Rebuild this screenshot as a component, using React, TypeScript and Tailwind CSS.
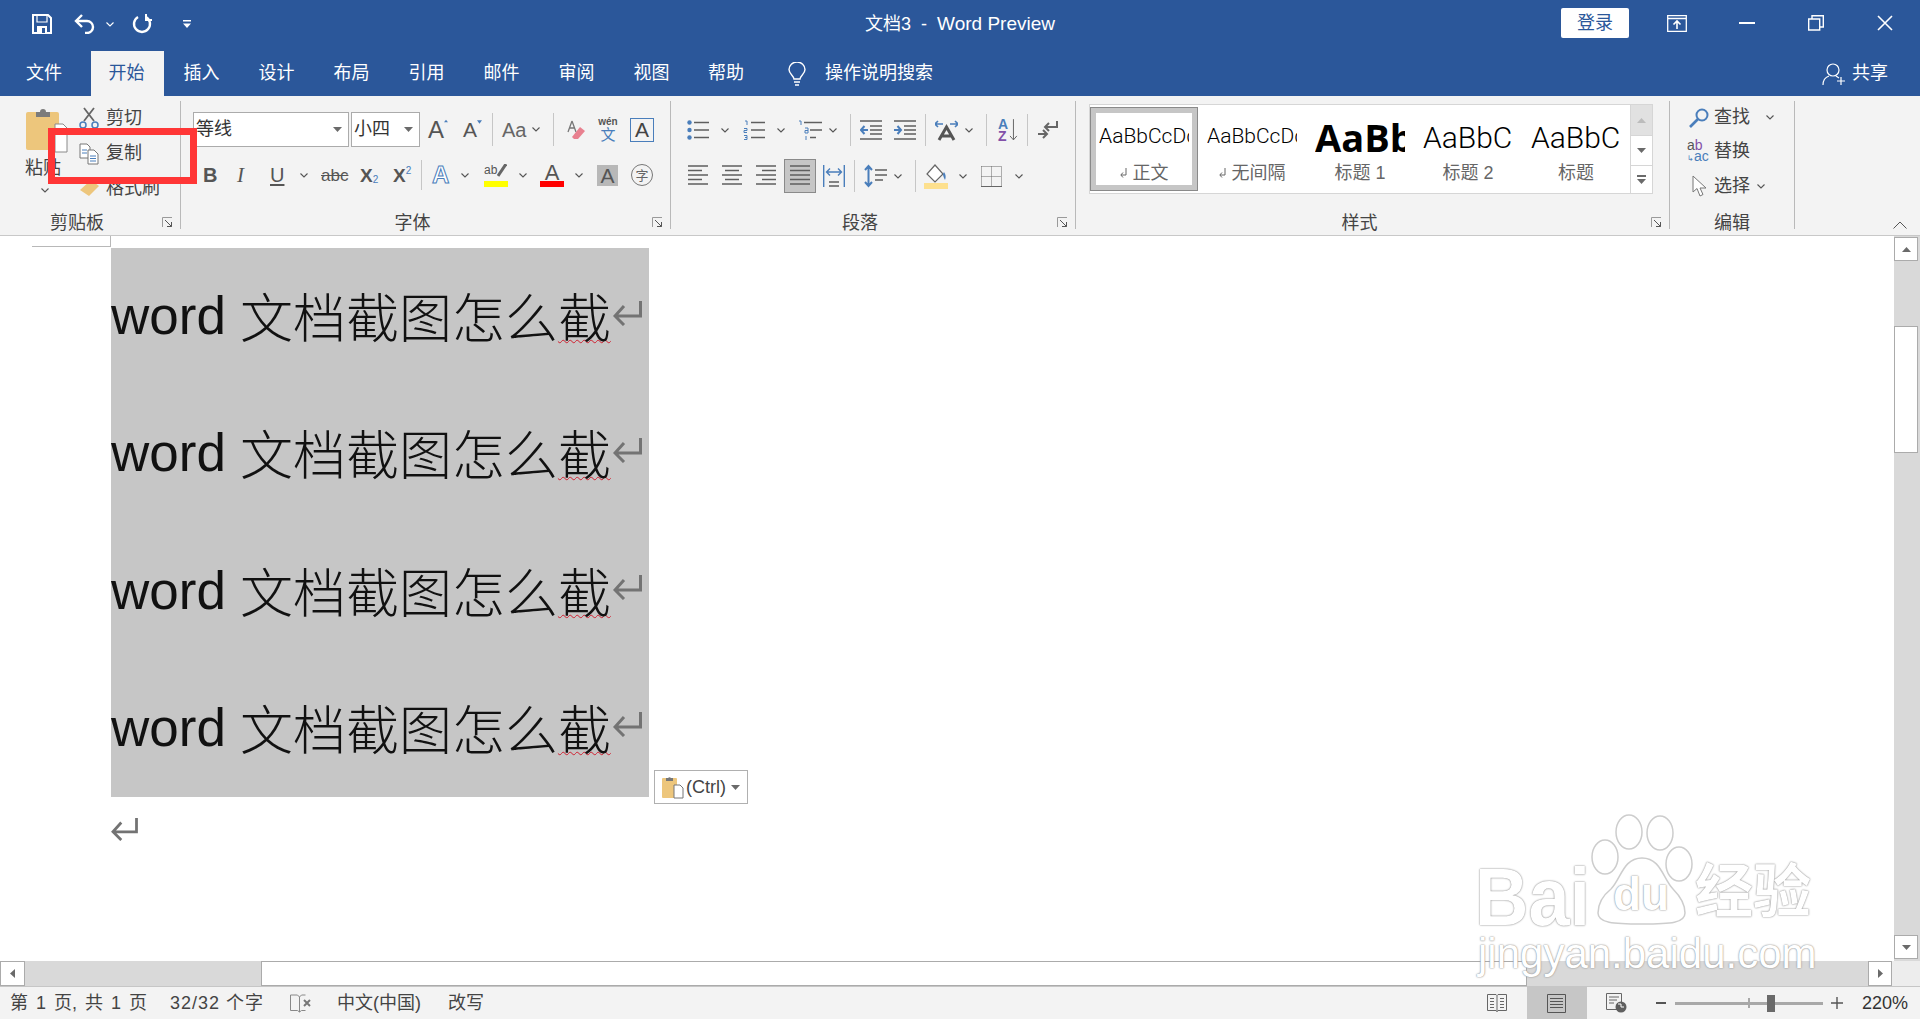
const gray = "#5f5f5f";
const blue = "#4a7ebb";

function Chev({ className = "" }: { className?: string }) {
  return (
    <svg width="8" height="5" viewBox="0 0 8 5" fill="none" className={`shrink-0 ${className}`}>
      <path d="M.5.5 4 4 7.5.5" stroke="#555" strokeWidth="1.1" />
    </svg>
  );
}

function Caret({ className = "" }: { className?: string }) {
  return (
    <svg width="9" height="5" viewBox="0 0 9 5" className={`shrink-0 ${className}`}>
      <path d="M0 0h9L4.5 5z" fill="#6a6a6a" />
    </svg>
  );
}

function Sep({ className = "" }: { className?: string }) {
  return <div className={`w-px self-stretch bg-[#c6c6c6] shrink-0 ${className}`} />;
}

function Launcher() {
  return (
    <svg width="11" height="11" viewBox="0 0 11 11" fill="none" className="absolute right-[7px] bottom-[1px]">
      <path d="M.5 10V.5H10" stroke="#9a9a9a" />
      <path d="M3 3l6.5 6.500M9.500 5v4.500H5" stroke="#555" />
    </svg>
  );
}

function Group({ className, label, children, launcher = true }: { className: string; label: string; children: React.ReactNode; launcher?: boolean }) {
  return (
    <div className={`relative flex flex-col shrink-0 h-full border-r border-[#b9b9b9] ${className}`}>
      <div className="flex-1 min-h-0">{children}</div>
      <div className={`h-[16px] leading-[16px] pt-[2px] text-center text-[18px] text-[#444] ${launcher ? "pr-[26px]" : ""}`}>{label}</div>
      {launcher && <Launcher />}
    </div>
  );
}

function Lines({ d, w = 22, h = 20, stroke = gray, children, className = "" }: { d: string; w?: number; h?: number; stroke?: string; children?: React.ReactNode; className?: string }) {
  return (
    <svg width={w} height={h} viewBox={`0 0 ${w} ${h}`} fill="none" className={`shrink-0 ${className}`}>
      <path d={d} stroke={stroke} strokeWidth="1.3" />
      {children}
    </svg>
  );
}

function StyleItem({ sample, label, selected = false, mark = false, sampleClass }: { sample: string; label: string; selected?: boolean; mark?: boolean; sampleClass: string }) {
  return (
    <div className={`w-[108px] h-[84px] shrink-0 border ${selected ? "border-[#8a8a8a]" : "border-transparent"}`}>
      <div className={`h-full border-[5px] ${selected ? "border-[#c6c6c6]" : "border-transparent"}`}>
        <div className={`w-[90px] h-[48px] mx-auto overflow-hidden whitespace-nowrap flex items-center ${sampleClass}`}>{sample}</div>
        <div className="mt-[3px] h-[18px] leading-[18px] flex items-center justify-center gap-[6px] text-[18px] text-[#666]">
          {mark && (
            <svg width="7" height="10" viewBox="0 0 7 10" fill="none">
              <path d="M6 0v7H1M3 4.500 .8 7 3 9.500" stroke="#666" />
            </svg>
          )}
          {label}
        </div>
      </div>
    </div>
  );
}

function ReturnMark({ w = 29, h = 26 }: { w?: number; h?: number }) {
  return (
    <svg width={w} height={h} viewBox="0 0 29 26" fill="none" className="shrink-0">
      <path d="M27.500 1v15H2M11 6 2 16l9 9" stroke="#737373" strokeWidth="3" />
    </svg>
  );
}

function DocLine() {
  return (
    <div className="h-[137.25px] pb-[2px] flex items-center text-[53px] leading-none text-[#111] whitespace-nowrap">
      <span className="font-['Liberation_Sans']">word</span>
      <span className="ml-[14px] font-['Noto_Sans_CJK_SC'] font-light">文档截图怎么</span>
      <span className="font-['Noto_Sans_CJK_SC'] font-light underline decoration-wavy decoration-[#d02030] decoration-1 underline-offset-[1px]">截</span>
      <span className="ml-[2px] -mt-[6px]"><ReturnMark /></span>
    </div>
  );
}

function Watermark() {
  const glow = "text-white [text-shadow:0_0_2px_#8a8a8a,0_0_1px_#a8a8a8]";
  return (
    <div className="absolute left-[1473px] top-[813px] w-[345px] h-[170px] pointer-events-none z-20 font-['Liberation_Sans','Noto_Sans_CJK_SC',sans-serif]">
      <svg width="230" height="120" viewBox="0 0 230 120" fill="none" stroke="#cdcdcd" strokeWidth="1.5" className="absolute left-0 top-0">
        <ellipse cx="132" cy="44" rx="13" ry="17" fill="#fff" />
        <ellipse cx="156" cy="19" rx="13" ry="17" fill="#fff" />
        <ellipse cx="187" cy="20" rx="13" ry="17" fill="#fff" />
        <ellipse cx="206" cy="51" rx="13" ry="17" fill="#fff" />
        <path d="M169 45C150 45 148 66 138 76 128 84 125 92 125 100 125 110 140 111 169 111S212 110 212 100C212 92 208 84 200 76 190 66 188 45 169 45Z" fill="#fff" />
      </svg>
      <span className={`absolute left-[2px] top-[44px] text-[74px] leading-none font-bold scale-y-110 origin-top ${glow}`}>Bai</span>
      <span className={`absolute left-[140px] top-[58px] text-[46px] leading-none font-bold ${glow}`}>du</span>
      <span className={`absolute left-[222px] top-[50px] text-[58px] leading-none font-bold whitespace-nowrap ${glow}`}>经验</span>
      <span className={`absolute left-[5px] top-[120px] text-[42px] leading-none whitespace-nowrap ${glow}`}>jingyan.baidu.com</span>
    </div>
  );
}

export default function App() {
  const tabs = [
    ["插入", "w-[75px]"],
    ["设计", "w-[75px]"],
    ["布局", "w-[75px]"],
    ["引用", "w-[75px]"],
    ["邮件", "w-[75px]"],
    ["审阅", "w-[75px]"],
    ["视图", "w-[75px]"],
    ["帮助", "w-[74px]"],
  ];
  const thin = "font-['Roboto'] font-light text-black";

  return (
    <div className="relative w-[1920px] h-[1019px] overflow-hidden bg-white font-['Liberation_Sans','Noto_Sans_CJK_SC',sans-serif]">
      {/* title + tabs */}
      <div className="h-[96px] bg-[#2b579a] text-white">
        <div className="h-[46px] grid grid-cols-[1fr_auto_1fr] items-center">
          <div className="flex items-center pl-[32px] pt-[2px]">
            <svg width="20" height="20" viewBox="0 0 20 20" fill="none">
              <path d="M1 1h15l3 3v15H1z" stroke="#fff" strokeWidth="2" />
              <path d="M5 1h10v7H5z" stroke="#fff" strokeWidth="1.200" />
              <path d="M5 12h10v7H5z" fill="#fff" />
              <path d="M10 14h3v5h-3z" fill="#2b579a" />
            </svg>
            <svg width="22" height="20" viewBox="0 0 22 20" fill="none" className="ml-[22px]">
              <path d="M8 1 2 7l6 6" stroke="#fff" strokeWidth="2.400" />
              <path d="M3 7h10a6 6 0 0 1 0 12h-2" stroke="#fff" strokeWidth="2.400" />
            </svg>
            <Chev className="ml-[10px] [&_path]:stroke-white" />
            <svg width="20" height="20" viewBox="0 0 20 20" fill="none" className="ml-[18px]">
              <path d="M6 3a8 8 0 1 0 8 0" stroke="#fff" strokeWidth="2.400" />
              <path d="M14 0v6h6" stroke="#fff" strokeWidth="2" />
            </svg>
            <svg width="8" height="8" viewBox="0 0 8 8" className="ml-[31px]">
              <path d="M0 0h8v1.400H0zM0 3.500h8L4 8z" fill="#fff" />
            </svg>
          </div>
          <div className="pt-[2px] text-[18px] whitespace-pre">
            文档3  -  <span className="text-[19px]">Word Preview</span>
          </div>
          <div className="flex items-center justify-end">
            <div className="w-[68px] h-[30px] mr-[13px] rounded-[2px] bg-white text-[#2b579a] text-[18px] flex items-center justify-center">登录</div>
            <div className="w-[70px] flex justify-center">
              <svg width="20" height="17" viewBox="0 0 20 17" fill="none" stroke="#fff" strokeWidth="1.300">
                <path d="M.7.700h18.600v15.600H.7zM.7 3.500h18.600" />
                <path d="M10 14V6.500M6.500 9.500 10 6l3.500 3.500" strokeWidth="1.600" />
              </svg>
            </div>
            <div className="w-[70px] flex justify-center">
              <div className="w-[16px] h-[2px] bg-white" />
            </div>
            <div className="w-[68px] flex justify-center">
              <svg width="16" height="16" viewBox="0 0 16 16" fill="none" stroke="#fff" strokeWidth="1.400">
                <path d="M.7 4h11v11H.7zM4 4V.7h11.300V12H12" />
              </svg>
            </div>
            <div className="w-[70px] flex justify-center">
              <svg width="16" height="16" viewBox="0 0 16 16" fill="none" stroke="#fff" strokeWidth="1.600">
                <path d="M1 1l14 14M15 1 1 15" />
              </svg>
            </div>
          </div>
        </div>
        <div className="h-[50px] pt-[5px] flex text-[18px]">
          <div className="w-[91px] h-[45px] pr-[3px] flex items-center justify-center">文件</div>
          <div className="w-[73px] h-[45px] pr-[2px] bg-[#f3f3f3] text-[#2b579a] flex items-center justify-center">开始</div>
          {tabs.map(([t, w]) => (
            <div key={t} className={`${w} h-[45px] flex items-center justify-center`}>{t}</div>
          ))}
          <div className="ml-[25px] h-[45px] flex items-center">
            <svg width="18" height="24" viewBox="0 0 18 24" fill="none" stroke="#fff" strokeWidth="1.400">
              <path d="M6 17c0-3-5-5-5-9.500a8 7.500 0 0 1 16 0C17 12 12 14 12 17z" />
              <path d="M6 20h6M7 23h4" />
            </svg>
          </div>
          <div className="ml-[19px] h-[45px] flex items-center">操作说明搜索</div>
          <div className="ml-auto h-[45px] pr-[32px] flex items-center">
            <svg width="24" height="24" viewBox="0 0 24 24" fill="none" stroke="#fff" strokeWidth="1.200">
              <circle cx="11" cy="8" r="6" />
              <path d="M1 23c0-5 3-8 6-9M14 14l3 2M19 15v8M15 19h8" />
            </svg>
            <span className="ml-[6px]">共享</span>
          </div>
        </div>
      </div>

      {/* ribbon */}
      <div className="h-[140px] bg-[#f3f3f3] border-b border-[#c8c8c8] pt-[5px] pb-[6px] flex">
        <Group className="w-[181px]" label="剪贴板">
          <div className="flex">
            <div className="w-[79px] pl-[26px] flex flex-col">
              <svg width="42" height="46" viewBox="0 0 42 46" className="mt-[6px]">
                <rect x="0" y="5" width="33" height="38" rx="2" fill="#edc67c" />
                <path d="M10 5h4a3 3 0 0 1 6 0h4v5H10z" fill="#7b7b7b" />
                <path d="M29 17h8l4 4v24H29z" fill="#fff" stroke="#8a8a8a" />
              </svg>
              <div className="mt-[6px] -ml-px w-[36px] h-[18px] leading-[18px] text-[18px] text-[#444] whitespace-nowrap">粘贴</div>
              <Chev className="mt-[11px] ml-[15px]" />
            </div>
            <div className="-mt-px text-[18px] text-[#444]">
              <div className="h-[36px] flex items-center">
                <svg width="20" height="22" viewBox="0 0 20 22" fill="none" className="shrink-0">
                  <path d="M5 14 15 1M15 14 5 1" stroke="#666" strokeWidth="1.800" />
                  <circle cx="4" cy="18" r="3" stroke={blue} strokeWidth="1.500" />
                  <circle cx="16" cy="18" r="3" stroke={blue} strokeWidth="1.500" />
                </svg>
                <span className="ml-[7px]">剪切</span>
              </div>
              <div className="h-[36px] flex items-center">
                <svg width="20" height="22" viewBox="0 0 20 22" fill="none" className="shrink-0">
                  <path d="M1 1h7l3 3v11H1z" fill="#fff" stroke="#777" />
                  <path d="M3 7h5M3 10h5" stroke={blue} />
                  <path d="M9 7h6l4 4v10H9z" fill="#fff" stroke="#777" />
                  <path d="M11 13h6M11 15.500h6M11 18h6" stroke={blue} />
                </svg>
                <span className="ml-[7px] -mt-[2px]">复制</span>
              </div>
              <div className="h-[36px] -mt-[2px] flex items-center">
                <svg width="22" height="20" viewBox="0 0 22 20" className="shrink-0">
                  <path d="M12 2 20 8 10 18 1 12z" fill="#edc67c" />
                  <path d="M12 2 18 -2 22 2 17 6z" fill="#555" />
                </svg>
                <span className="ml-[5px] whitespace-nowrap">格式刷</span>
              </div>
            </div>
          </div>
          <div className="absolute left-[48px] top-[27px] w-[149px] h-[56px] border-[7px] border-[#ff3636] z-10" />
        </Group>

        <Group className="w-[490px]" label="字体">
          <div className="mt-[11px] h-[35px] flex items-center">
            <div className="ml-[12px] w-[156px] h-[35px] bg-white border border-[#ababab] flex items-center pl-[2px] pr-[6px] text-[18px] text-[#333]">
              等线<Caret className="ml-auto" />
            </div>
            <div className="ml-[2px] w-[69px] h-[35px] bg-white border border-[#ababab] flex items-center pl-[2px] pr-[6px] text-[18px] text-[#333]">
              小四<Caret className="ml-auto" />
            </div>
            <div className="ml-[8px] w-[20px] flex items-start text-[24px] leading-none text-[#555]">
              A<svg width="6" height="4" viewBox="0 0 6 4" className="mt-[1px]"><path d="M3 0l3 4H0z" fill={blue} /></svg>
            </div>
            <div className="ml-[15px] w-[19px] flex items-start text-[21px] leading-none text-[#555]">
              A<svg width="6" height="4" viewBox="0 0 6 4" className="mt-[1px]"><path d="M0 0h6L3 4z" fill={blue} /></svg>
            </div>
            <Sep className="ml-[10px] my-[1px]" />
            <div className="ml-[9px] w-[23px] text-[20px] leading-none text-[#666] whitespace-nowrap">Aa</div>
            <Chev className="ml-[7px]" />
            <Sep className="ml-[13px] my-[1px]" />
            <svg width="18" height="20" viewBox="0 0 18 20" className="ml-[13px] shrink-0">
              <path d="M5 1 1 12M5 1l4 11M2.500 8h5" stroke="#777" strokeWidth="1.300" fill="none" />
              <path d="M13 7l5 4-7 8H7l-2-2z" fill="#e8808f" />
            </svg>
            <div className="ml-[13px] w-[20px] flex flex-col items-center leading-none">
              <span className="text-[10px] font-bold text-[#555]">wén</span>
              <span className="text-[15px] text-[#4a7ebb]">文</span>
            </div>
            <div className="ml-[12px] w-[24px] h-[24px] border border-[#4a7ebb] flex items-center justify-center text-[21px] leading-none text-[#444]">A</div>
          </div>
          <div className="mt-[11px] h-[34px] flex items-center text-[#555]">
            <span className="ml-[22px] w-[12px] text-[20px] leading-none font-bold">B</span>
            <span className="ml-[22px] w-[11px] text-[21px] leading-none italic font-['Liberation_Serif']">I</span>
            <span className="ml-[22px] w-[13px] text-[20px] leading-none underline underline-offset-2">U</span>
            <Chev className="ml-[17px]" />
            <span className="ml-[13px] w-[24px] text-[17px] leading-none line-through">abc</span>
            <span className="ml-[15px] w-[18px] flex items-end text-[19px] leading-none font-bold">X<span className="text-[10px] font-normal text-[#4a7ebb]">2</span></span>
            <span className="ml-[15px] w-[19px] flex items-start text-[19px] leading-none font-bold">X<span className="text-[10px] font-normal text-[#4a7ebb]">2</span></span>
            <Sep className="ml-[9px] my-[2px]" />
            <span className="ml-[10px] w-[18px] text-[24px] leading-none font-bold text-white [-webkit-text-stroke:1px_#4a7ebb]">A</span>
            <Chev className="ml-[11px]" />
            <div className="ml-[15px] w-[24px] flex flex-col">
              <div className="flex h-[17px] items-start">
                <span className="text-[12px] leading-none">ab</span>
                <svg width="10" height="15" viewBox="0 0 10 15"><path d="M9 0 1 12" stroke="#666" strokeWidth="3" /></svg>
              </div>
              <div className="h-[6px] bg-[#ffff00]" />
            </div>
            <Chev className="ml-[11px]" />
            <div className="ml-[13px] w-[24px] flex flex-col items-center">
              <span className="h-[17px] text-[22px] leading-[18px]">A</span>
              <div className="h-[6px] w-full bg-[#ff0000]" />
            </div>
            <Chev className="ml-[11px]" />
            <div className="ml-[14px] w-[21px] h-[21px] bg-[#b8b8b8] flex items-center justify-center text-[21px] leading-none">A</div>
            <div className="ml-[13px] w-[22px] h-[22px] rounded-full border-[1.5px] border-[#777] flex items-center justify-center text-[13px] leading-none text-[#666]">字</div>
          </div>
        </Group>

        <Group className="w-[405px]" label="段落">
          <div className="mt-[13px] h-[32px] flex items-center">
            <Lines className="ml-[16px]" d="M7 2.500h15M7 10h15M7 17.500h15">
              <circle cx="2.500" cy="2.500" r="2.200" fill={blue} /><circle cx="2.500" cy="10" r="2.200" fill={blue} /><circle cx="2.500" cy="17.500" r="2.200" fill={blue} />
            </Lines>
            <Chev className="ml-[12px]" />
            <Lines className="ml-[14px]" d="M8 2.500h14M8 10h14M8 17.500h14">
              <path d="M2 1h2v4M1 8.500h3v2H1v2h3M1 15.500h3v2H2M4 17.500v2H1" stroke={blue} />
            </Lines>
            <Chev className="ml-[12px]" />
            <Lines w={24} className="ml-[13px]" d="M6 2.500h18M12 10h12M12 17.500h6">
              <path d="M1 1h2v4M7 8h3v5H7v-2.500h3M8 16v4" stroke={blue} />
            </Lines>
            <Chev className="ml-[7px]" />
            <Sep className="ml-[13px]" />
            <Lines className="ml-[9px]" d="M0 1h22M10 6h12M10 10h12M10 14h12M0 19h22">
              <path d="M8 10H1M4.500 6 1 10l3.500 4" stroke={blue} strokeWidth="2" />
            </Lines>
            <Lines className="ml-[12px]" d="M0 1h22M10 6h12M10 10h12M10 14h12M0 19h22">
              <path d="M0 10h7M3.500 6 7 10l-3.500 4" stroke={blue} strokeWidth="2" />
            </Lines>
            <Sep className="ml-[9px]" />
            <div className="ml-[9px] w-[23px] h-[21px] shrink-0">
              <svg width="23" height="21" viewBox="0 0 23 21" fill="none">
                <path d="M0 4h8M3 1 0 4l3 3M15 4h8M20 1l3 3-3 3" stroke={blue} strokeWidth="1.600" />
                <path d="M4 20 11.500 7 19 20M7 16h9" stroke="#555" strokeWidth="3" />
              </svg>
            </div>
            <Chev className="ml-[7px]" />
            <Sep className="ml-[13px]" />
            <div className="ml-[11px] w-[20px] flex items-center">
              <div className="flex flex-col text-[14px] leading-[12px] font-bold">
                <span className="text-[#4a7ebb]">A</span>
                <span className="text-[#8250a8]">Z</span>
              </div>
              <svg width="9" height="22" viewBox="0 0 9 22" fill="none" className="ml-[1px]"><path d="M4.500 0v21M1 17l3.500 4L8 17" stroke="#666" /></svg>
            </div>
            <Sep className="ml-[9px]" />
            <svg width="20" height="20" viewBox="0 0 20 20" fill="none" className="ml-[10px] shrink-0" stroke="#666" strokeWidth="2">
              <path d="M19 1v6H8M11 3 7 7l4 4" />
              <path d="M0 14h8M5 10l4 4-4 4" />
            </svg>
          </div>
          <div className="mt-[13px] h-[34px] flex items-center">
            <Lines w={20} h={22} className="ml-[17px]" d="M0 1h20M0 5.500h14M0 10h20M0 14.500h14M0 19h20" />
            <Lines w={20} h={22} className="ml-[14px]" d="M0 1h20M3 5.500h14M0 10h20M3 14.500h14M0 19h20" />
            <Lines w={20} h={22} className="ml-[14px]" d="M0 1h20M6 5.500h14M0 10h20M6 14.500h14M0 19h20" />
            <div className="ml-[8px] w-[32px] h-[34px] bg-[#c6c6c6] border border-[#8a8a8a] flex items-center justify-center">
              <Lines w={20} h={22} d="M0 1h20M0 5.500h20M0 10h20M0 14.500h20M0 19h20" />
            </div>
            <Lines h={22} className="ml-[7px]" d="M6 17h10M6 21h10M0 0" >
              <path d="M.7 0v22M21.300 0v22M4 7h14M7 3.500 3.500 7 7 10.500M15 3.500 18.500 7 15 10.500" stroke={blue} strokeWidth="1.400" />
            </Lines>
            <Sep className="ml-[9px] my-[1px]" />
            <Lines w={23} h={24} className="ml-[9px]" d="M11 6h12M11 11h12M11 16h8">
              <path d="M4.500 2v20M1 6l3.500-4L8 6M1 18l3.500 4L8 18" stroke={blue} strokeWidth="2" />
            </Lines>
            <Chev className="ml-[7px]" />
            <Sep className="ml-[13px] my-[1px]" />
            <svg width="24" height="25" viewBox="0 0 24 25" fill="none" className="ml-[8px] shrink-0">
              <path d="M11 1 3 10l8 8 8-8z" fill="#fff" stroke="#666" strokeWidth="1.200" />
              <path d="M20 8c2 3 2 5 1 8-1-2-2-4-2-6z" fill={blue} />
              <rect y="19" width="24" height="6" fill="#fde08e" />
            </svg>
            <Chev className="ml-[11px]" />
            <svg width="21" height="21" viewBox="0 0 21 21" fill="none" className="ml-[14px] shrink-0">
              <path d="M.5.500h20M.5.500v20M20.500.500v20M10.500.500v20M.5 10.500h20" stroke="#666" strokeDasharray="1 1" />
              <path d="M0 20.500h21" stroke="#666" />
            </svg>
            <Chev className="ml-[13px]" />
          </div>
        </Group>

        <Group className="w-[594px]" label="样式">
          <div className="ml-[13px] mt-[3px] h-[90px] flex">
            <div className="w-[542px] h-[90px] bg-white border border-[#d6d6d6] py-[2px] flex">
              <StyleItem selected mark label="正文" sample="AaBbCcDd" sampleClass={`text-[21px] ${thin}`} />
              <StyleItem mark label="无间隔" sample="AaBbCcDd" sampleClass={`text-[21px] ${thin}`} />
              <StyleItem label="标题 1" sample="AaBbC" sampleClass="text-[38px] font-bold text-black font-['Open_Sans']" />
              <StyleItem label="标题 2" sample="AaBbC" sampleClass={`text-[30px] ${thin}`} />
              <StyleItem label="标题" sample="AaBbC" sampleClass={`text-[30px] ${thin}`} />
            </div>
            <div className="w-[22px] flex flex-col">
              <div className="h-[32px] bg-[#e1e1e1] border border-l-0 border-[#d6d6d6] flex items-center justify-center">
                <Caret className="rotate-180 opacity-30" />
              </div>
              <div className="h-[29px] bg-white border-r border-[#d6d6d6] flex items-center justify-center">
                <Caret />
              </div>
              <div className="h-[29px] bg-white border border-l-0 border-[#d6d6d6] flex flex-col items-center justify-center gap-[2px]">
                <div className="w-[9px] h-[1.5px] bg-[#6a6a6a]" />
                <Caret />
              </div>
            </div>
          </div>
        </Group>

        <Group className="w-[125px]" label="编辑" launcher={false}>
          <div className="text-[18px] text-[#444]">
            <div className="h-[33px] flex items-center pl-[17px]">
              <svg width="24" height="20" viewBox="0 0 24 20" fill="none" className="shrink-0">
                <circle cx="15" cy="7" r="5.500" stroke={blue} strokeWidth="2" />
                <path d="M11 11 3 19" stroke={blue} strokeWidth="2.600" />
              </svg>
              <span className="ml-[3px]">查找</span>
              <Chev className="ml-[16px]" />
            </div>
            <div className="h-[35px] flex items-center pl-[17px]">
              <div className="w-[24px] flex flex-col text-[14px] leading-[11px] shrink-0">
                <span className="text-[#555]">a<span className="text-[#8250a8]">b</span></span>
                <span className="text-[#4a7ebb] whitespace-nowrap"><span className="text-[8px]">↳</span>ac</span>
              </div>
              <span className="ml-[3px]">替换</span>
            </div>
            <div className="h-[34px] flex items-center pl-[17px]">
              <div className="w-[24px] shrink-0 pl-[5px]">
                <svg width="15" height="22" viewBox="0 0 15 22" fill="none">
                  <path d="M1 1v16l4-3.500L8 21l3-1.500-3-6.500h6z" stroke="#777" fill="#fff" />
                </svg>
              </div>
              <span className="ml-[3px]">选择</span>
              <Chev className="ml-[7px]" />
            </div>
          </div>
        </Group>

        <div className="flex-1 flex flex-col justify-end pl-[98px]">
          <svg width="14" height="8" viewBox="0 0 14 8" fill="none"><path d="M.5 7.500 7 1l6.500 6.500" stroke="#555" /></svg>
        </div>
      </div>

      {/* document */}
      <div className="h-[725px] flex">
        <div className="relative flex-1 bg-white pl-[111px] pt-[12px]">
          <div className="absolute left-[32px] top-0 w-[79px] h-[11px] border-r border-b border-[#b8b8b8]" />
          <div className="w-[538px] bg-[#c6c6c6]">
            <DocLine />
            <DocLine />
            <DocLine />
            <DocLine />
          </div>
          <div className="mt-[20px]"><ReturnMark w={27} h={24} /></div>
          <div className="absolute left-[654px] top-[534px] w-[94px] h-[34px] bg-white border border-[#b0b0b0] flex items-center pl-[7px] text-[18px] text-[#444]">
            <svg width="22" height="24" viewBox="0 0 22 24" className="shrink-0">
              <rect y="3" width="15" height="20" rx="1" fill="#edc67c" />
              <path d="M4 3h2a2 2 0 0 1 3 0h2v3H4z" fill="#777" />
              <path d="M12 10h6l3 3v10h-9z" fill="#fff" stroke="#777" />
            </svg>
            <span className="ml-[2px] leading-none">(Ctrl)</span>
            <Caret className="ml-[5px]" />
          </div>
        </div>
        <div className="w-[26px] bg-[#d9d9d9] flex flex-col pt-px pb-[2px] pr-[2px]">
          <div className="h-[24px] bg-white border border-[#ababab] flex items-center justify-center"><Caret className="rotate-180" /></div>
          <div className="h-[65px]" />
          <div className="h-[127px] bg-white border border-[#ababab]" />
          <div className="flex-1" />
          <div className="h-[24px] bg-white border border-[#ababab] flex items-center justify-center"><Caret /></div>
        </div>
      </div>

      {/* horizontal scrollbar */}
      <div className="h-[26px] border-b border-[#c6c6c6] flex">
        <div className="w-[25px] h-[25px] bg-white border border-[#ababab] flex items-center justify-center"><Caret className="rotate-90" /></div>
        <div className="w-[236px] h-[25px] bg-[#d9d9d9]" />
        <div className="w-[1266px] h-[25px] bg-white border border-[#ababab]" />
        <div className="w-[341px] h-[25px] bg-[#d9d9d9]" />
        <div className="w-[24px] h-[25px] bg-white border border-[#ababab] flex items-center justify-center"><Caret className="-rotate-90" /></div>
        <div className="flex-1 h-[25px] bg-[#ededed]" />
      </div>

      {/* status bar */}
      <div className="h-[32px] pt-px bg-[#f3f3f3] flex items-stretch text-[18px] text-[#444]">
        <div className="w-[170px] pl-[10px] flex items-center whitespace-pre [word-spacing:3px]">第 1 页, 共 1 页</div>
        <div className="w-[120px] flex items-center whitespace-pre tracking-[1px]">32/32 个字</div>
        <div className="w-[47px] flex items-center">
          <svg width="22" height="22" viewBox="0 0 22 22" fill="none">
            <path d="M.5 2h7l2 2v15l-2-1.500h-7zM9.500 4l2-2h4M9.500 19l2-1.500h4" stroke="#888" />
            <path d="M14 7l6 6M20 7l-6 6" stroke="#777" strokeWidth="2" />
          </svg>
        </div>
        <div className="w-[111px] flex items-center whitespace-nowrap">中文(中国)</div>
        <div className="flex items-center">改写</div>
        <div className="ml-auto flex items-stretch -mt-px">
          <div className="w-[60px] flex items-center justify-center">
            <svg width="20" height="19" viewBox="0 0 20 19" fill="none" stroke="#666">
              <path d="M.5.500h8.500l1 1 1-1h8.500v16H11l-1 1-1-1H.5zM10 1.500V18M3 4.500h4M3 7.500h4M3 10.500h4M3 13.500h4M13 4.500h4M13 7.500h4M13 10.500h4M13 13.500h4" />
            </svg>
          </div>
          <div className="w-[60px] bg-[#c6c6c6] flex items-center justify-center">
            <svg width="19" height="19" viewBox="0 0 19 19" fill="none" stroke="#555">
              <path d="M.5.500h18v18H.5zM3 4.500h13M3 7.500h13M3 10.500h13M3 13.500h13" />
            </svg>
          </div>
          <div className="w-[60px] flex items-center justify-center">
            <svg width="21" height="20" viewBox="0 0 21 20" fill="none">
              <path d="M.5.500h15v16H.5zM3 4h10M3 7h8M3 10h5" stroke="#666" />
              <circle cx="15" cy="14" r="5.500" fill="#5f5f5f" />
              <path d="M12 11h3v3h3" stroke="#fff" />
            </svg>
          </div>
          <div className="ml-[9px] w-[10px] flex items-center"><div className="w-full h-[2px] bg-[#555]" /></div>
          <div className="ml-[9px] w-[148px] flex items-center relative">
            <div className="w-full h-[3px] bg-[#a8a8a8]" />
            <div className="absolute left-[73px] top-[11px] w-[2px] h-[10px] bg-[#a8a8a8]" />
            <div className="absolute left-[92px] top-[8px] w-[8px] h-[17px] bg-[#6a6a6a]" />
          </div>
          <div className="ml-[8px] w-[12px] flex items-center">
            <svg width="12" height="12" viewBox="0 0 12 12" stroke="#555" strokeWidth="1.400"><path d="M0 6h12M6 0v12" /></svg>
          </div>
          <div className="ml-[19px] pr-[12px] flex items-center text-[18px] text-[#333]">220%</div>
        </div>
      </div>

      <Watermark />
    </div>
  );
}
